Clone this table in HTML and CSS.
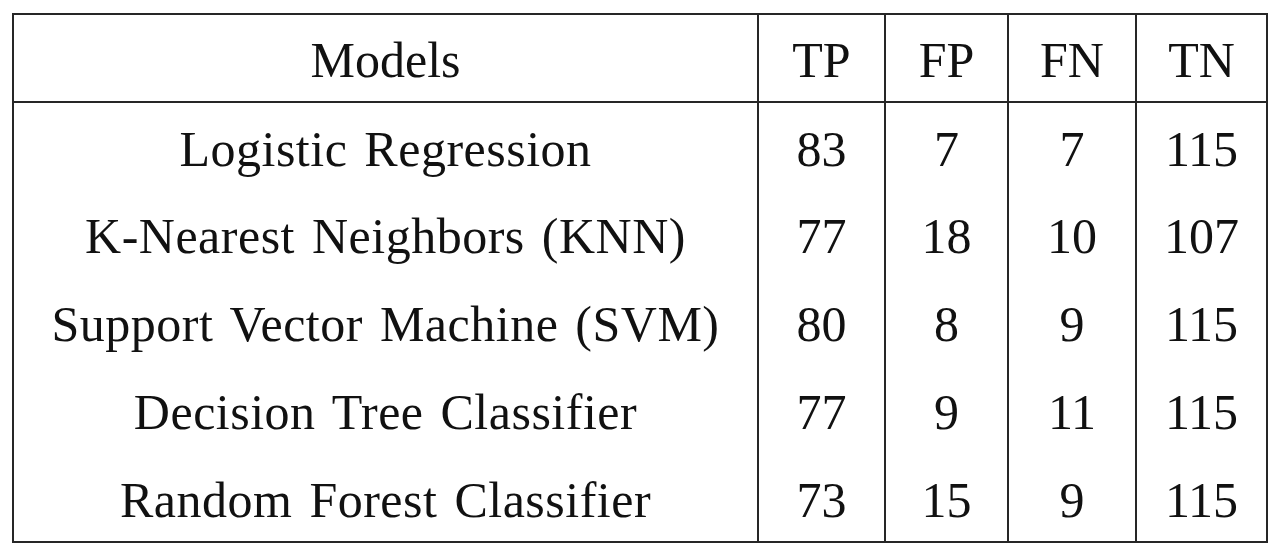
FILE: index.html
```html
<!DOCTYPE html>
<html>
<head>
<meta charset="utf-8">
<link rel="stylesheet" href="styles.css">
</head>
<body>
<div class="page">
<table class="results">
  <colgroup>
    <col class="c-model">
    <col class="c-tp">
    <col class="c-fp">
    <col class="c-fn">
    <col class="c-tn">
  </colgroup>
  <thead>
    <tr class="head-row"><th>Models</th><th>TP</th><th>FP</th><th>FN</th><th>TN</th></tr>
  </thead>
  <tbody>
    <tr><td class="model">Logistic Regression</td><td>83</td><td>7</td><td>7</td><td>115</td></tr>
    <tr><td class="model">K-Nearest Neighbors (KNN)</td><td>77</td><td>18</td><td>10</td><td>107</td></tr>
    <tr><td class="model">Support Vector Machine (SVM)</td><td>80</td><td>8</td><td>9</td><td>115</td></tr>
    <tr><td class="model">Decision Tree Classifier</td><td>77</td><td>9</td><td>11</td><td>115</td></tr>
    <tr><td class="model">Random Forest Classifier</td><td>73</td><td>15</td><td>9</td><td>115</td></tr>
  </tbody>
</table>
</div>
</body>
</html>
```

FILE: styles.css
```css
html, body {
  margin: 0;
  padding: 0;
  background: #ffffff;
}
.page {
  padding: 13px 0 0 12px;
}
.results {
  border-collapse: collapse;
  table-layout: fixed;
  width: 1256px;
  font-family: "Liberation Serif", "DejaVu Serif", serif;
  font-size: 50px;
  color: #111111;
  border: 2px solid #262626;
}
.c-model { width: 745px; }
.c-tp { width: 127px; }
.c-fp { width: 123px; }
.c-fn { width: 128px; }
.c-tn { width: 131px; }
.results th,
.results td {
  font-weight: normal;
  text-align: center;
  vertical-align: middle;
  padding: 4px 0 0 0;
  border-left: 2px solid #262626;
  border-right: 2px solid #262626;
  white-space: nowrap;
}
.results td.model {
  word-spacing: 4px;
  letter-spacing: 0.5px;
}
.results tr {
  height: 88px;
}
.head-row th {
  border-bottom: 2px solid #262626;
}
```
